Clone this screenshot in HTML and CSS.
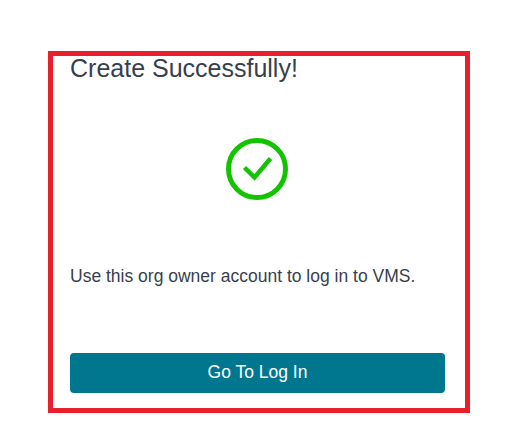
FILE: index.html
```html
<!DOCTYPE html>
<html lang="en">
<head>
  <meta charset="UTF-8" />
  <meta name="viewport" content="width=device-width, initial-scale=1.0"/>
  <title>Create Successfully</title>
  <link rel="stylesheet" href="styles.css">
</head>
<body>
  <div class="card">
    <h2 class="title">Create Successfully!</h2>
    <div class="icon-row">
      <svg class="check-icon" width="62" height="62" viewBox="0 0 62 62" fill="none">
        <circle cx="31" cy="31" r="28.5" stroke="#12c400" stroke-width="5"/>
        <path d="M18.5 29.5L28.5 39.5L44.5 20.5" stroke="#12c400" stroke-width="4.5"/>
      </svg>
    </div>
    <p class="message">Use this org owner account to log in to VMS.</p>
    <button class="btn">Go To Log In</button>
  </div>
</body>
</html>
```

FILE: styles.css
```css
body {
  font-family: 'Liberation Sans', Arial, sans-serif;
  background: #ffffff;
  margin: 0;
  padding: 51px 0 0 48px;
  overflow: hidden;
}

.card {
  box-sizing: border-box;
  width: 422px;
  height: 362px;
  border: 5px solid #e81f2d;
  padding: 0 20px 15px 17px;
  display: flex;
  flex-direction: column;
}

.title {
  margin: 0;
  font-size: 25px;
  font-weight: normal;
  line-height: 25px;
  color: #373f4f;
}

.icon-row {
  display: flex;
  justify-content: center;
  margin-top: 57px;
  padding-right: 1px;
}

.message {
  margin: 64px 0 0;
  font-size: 17.5px;
  line-height: 24px;
  color: #373f4f;
}

.btn {
  margin-top: auto;
  height: 40px;
  padding: 0 0 2px;
  font-family: inherit;
  font-size: 17.5px;
  color: #ffffff;
  background-color: #00778f;
  border: none;
  border-radius: 4px;
  cursor: pointer;
}
```
